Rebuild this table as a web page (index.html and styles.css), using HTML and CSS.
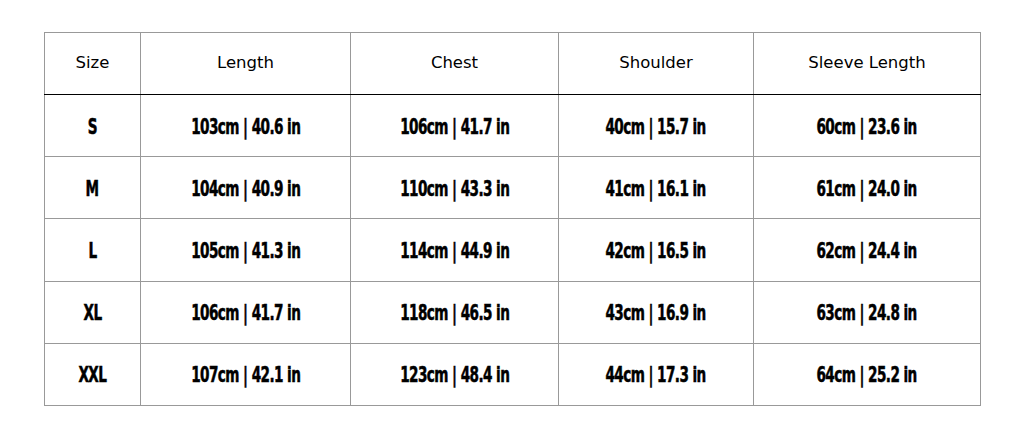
FILE: index.html
```html
<!DOCTYPE html>
<html>
<head>
<meta charset="utf-8">
<link rel="stylesheet" href="styles.css">
</head>
<body>
<div class="wrap">
<table class="size-table">
<colgroup>
<col class="c1"><col class="c2"><col class="c3"><col class="c4"><col class="c5">
</colgroup>
<thead>
<tr><th>Size</th><th>Length</th><th>Chest</th><th>Shoulder</th><th>Sleeve Length</th></tr>
</thead>
<tbody>
<tr><td><span class="v">S</span></td><td><span class="v">103cm | 40.6 in</span></td><td><span class="v">106cm | 41.7 in</span></td><td><span class="v">40cm | 15.7 in</span></td><td><span class="v">60cm | 23.6 in</span></td></tr>
<tr><td><span class="v">M</span></td><td><span class="v">104cm | 40.9 in</span></td><td><span class="v">110cm | 43.3 in</span></td><td><span class="v">41cm | 16.1 in</span></td><td><span class="v">61cm | 24.0 in</span></td></tr>
<tr><td><span class="v">L</span></td><td><span class="v">105cm | 41.3 in</span></td><td><span class="v">114cm | 44.9 in</span></td><td><span class="v">42cm | 16.5 in</span></td><td><span class="v">62cm | 24.4 in</span></td></tr>
<tr><td><span class="v">XL</span></td><td><span class="v">106cm | 41.7 in</span></td><td><span class="v">118cm | 46.5 in</span></td><td><span class="v">43cm | 16.9 in</span></td><td><span class="v">63cm | 24.8 in</span></td></tr>
<tr><td><span class="v">XXL</span></td><td><span class="v">107cm | 42.1 in</span></td><td><span class="v">123cm | 48.4 in</span></td><td><span class="v">44cm | 17.3 in</span></td><td><span class="v">64cm | 25.2 in</span></td></tr>
</tbody>
</table>
</div>
</body>
</html>
```
FILE: styles.css
```css
html, body { margin: 0; padding: 0; background: #fff; }
.wrap { padding: 32px 0 0 44px; }
.size-table {
  border-collapse: collapse;
  table-layout: fixed;
  width: 936px;
}
.c1 { width: 96px; }
.c2 { width: 210px; }
.c3 { width: 208px; }
.c4 { width: 195px; }
.c5 { width: 227px; }
.size-table th, .size-table td {
  border: 1px solid #999;
  text-align: center;
  vertical-align: middle;
  padding: 0;
  color: #000;
}
.size-table th {
  height: 58px;
  padding-bottom: 3px;
  font-family: "DejaVu Sans", sans-serif;
  font-weight: normal;
  font-size: 16.5px;
  border-bottom: 1px solid #000;
}
.size-table td {
  height: 58.2px;
  padding-top: 3px;
  font-family: "DejaVu Sans Condensed", "DejaVu Sans", sans-serif;
  font-weight: bold;
  font-size: 21px;
  letter-spacing: -0.8px;
  line-height: 1;
}
.v {
  display: inline-block;
  transform: scale(0.72, 1);
  -webkit-text-stroke: 0.5px #000;
  white-space: nowrap;
}
```
